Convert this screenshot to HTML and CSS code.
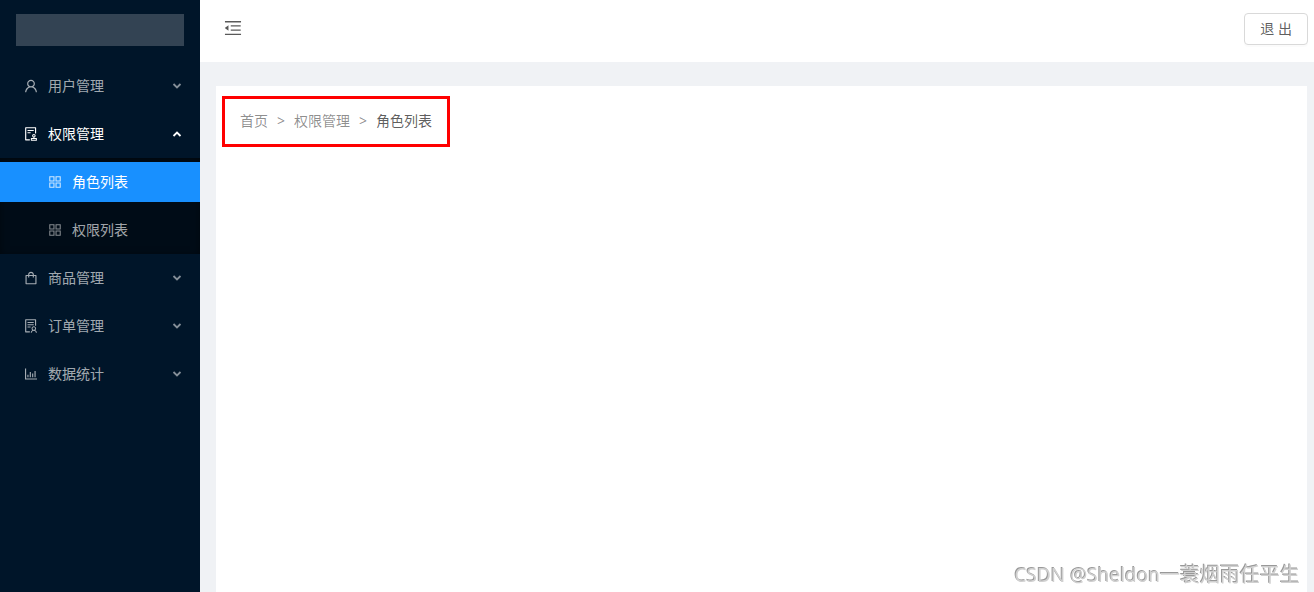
FILE: index.html
```html
<!DOCTYPE html>
<html lang="zh-CN">
<head>
    <meta charset="UTF-8">
    <meta name="viewport" content="width=device-width, initial-scale=1.0">
    <title>角色列表</title>
    <link rel="stylesheet" href="styles.css">
</head>
<body>
    <!-- icons -->
    <svg class="sprite" aria-hidden="true">
        <symbol id="i-user" viewBox="64 64 896 896"><path d="M858.5 763.6a374 374 0 00-80.6-119.5 375.63 375.63 0 00-119.5-80.6c-.4-.2-.8-.3-1.2-.5C719.5 518 760 444.7 760 362c0-137-111-248-248-248S264 225 264 362c0 82.7 40.5 156 102.8 201.1-.4.2-.8.3-1.2.5-44.8 18.9-85 46-119.5 80.6a375.63 375.63 0 00-80.6 119.5A371.7 371.7 0 00136 901.8a8 8 0 008 8.2h60c4.4 0 7.9-3.5 8-7.8 2-77.2 33-149.5 87.8-204.3 56.7-56.7 132-87.9 212.2-87.9s155.5 31.2 212.2 87.9C779 752.7 810 825 812 902.2c.1 4.4 3.6 7.8 8 7.8h60a8 8 0 008-8.2c-1-47.8-10.9-94.3-29.5-138.2zM512 534c-45.9 0-89.1-17.9-121.6-50.4S340 407.9 340 362c0-45.9 17.9-89.1 50.4-121.6S466.1 190 512 190s89.1 17.9 121.6 50.4S684 316.1 684 362c0 45.9-17.9 89.1-50.4 121.6S557.9 534 512 534z"/></symbol>
        <symbol id="i-audit" viewBox="64 64 896 896"><path d="M296 250c-4.4 0-8 3.6-8 8v48c0 4.4 3.6 8 8 8h384c4.4 0 8-3.6 8-8v-48c0-4.4-3.6-8-8-8H296zm184 144H296c-4.4 0-8 3.6-8 8v48c0 4.4 3.6 8 8 8h184c4.4 0 8-3.6 8-8v-48c0-4.4-3.6-8-8-8zm-48 458H208V148h560v320c0 4.4 3.6 8 8 8h56c4.4 0 8-3.6 8-8V108c0-17.7-14.3-32-32-32H168c-17.7 0-32 14.3-32 32v784c0 17.7 14.3 32 32 32h264c4.4 0 8-3.6 8-8v-56c0-4.4-3.6-8-8-8zm440-88H728v-36.6c46.3-13.8 80-56.6 80-107.4 0-61.9-50.1-112-112-112s-112 50.1-112 112c0 50.7 33.7 93.6 80 107.4V764H520c-8.8 0-16 7.2-16 16v152c0 8.8 7.2 16 16 16h352c8.8 0 16-7.2 16-16V780c0-8.8-7.2-16-16-16zM646 620c0-27.6 22.4-50 50-50s50 22.4 50 50-22.4 50-50 50-50-22.4-50-50zm180 266H566v-60h260v60z"/></symbol>
        <symbol id="i-appstore" viewBox="64 64 896 896"><path fill-rule="evenodd" d="M144 144h336v336H144zM212 212v200h200V212zM544 144h336v336H544zM612 212v200h200V212zM144 544h336v336H144zM212 612v200h200V612zM544 544h336v336H544zM612 612v200h200V612z"/></symbol>
        <symbol id="i-shopping" viewBox="64 64 896 896"><path d="M832 312H696v-16c0-101.6-82.4-184-184-184s-184 82.4-184 184v16H192c-17.7 0-32 14.3-32 32v536c0 17.7 14.3 32 32 32h640c17.7 0 32-14.3 32-32V344c0-17.7-14.3-32-32-32zm-432-16c0-61.9 50.1-112 112-112s112 50.1 112 112v16H400v-16zm392 544H232V384h96v88c0 4.4 3.6 8 8 8h56c4.4 0 8-3.6 8-8v-88h224v88c0 4.4 3.6 8 8 8h56c4.4 0 8-3.6 8-8v-88h96v456z"/></symbol>
        <symbol id="i-solution" viewBox="64 64 896 896"><path d="M688 264c0-4.4-3.6-8-8-8H296c-4.4 0-8 3.6-8 8v48c0 4.4 3.6 8 8 8h384c4.4 0 8-3.6 8-8v-48zm-8 136H296c-4.4 0-8 3.6-8 8v48c0 4.4 3.6 8 8 8h384c4.4 0 8-3.6 8-8v-48c0-4.4-3.6-8-8-8zM480 544H296c-4.4 0-8 3.6-8 8v48c0 4.4 3.6 8 8 8h184c4.4 0 8-3.6 8-8v-48c0-4.4-3.6-8-8-8zm-48 308H208V148h560v344c0 4.4 3.6 8 8 8h56c4.4 0 8-3.6 8-8V108c0-17.7-14.3-32-32-32H168c-17.7 0-32 14.3-32 32v784c0 17.7 14.3 32 32 32h264c4.4 0 8-3.6 8-8v-56c0-4.4-3.6-8-8-8zm356.8-74.4c29-26.3 47.2-64.3 47.2-106.6 0-79.5-64.5-144-144-144s-144 64.5-144 144c0 42.3 18.2 80.3 47.2 106.6-57 32.5-96.2 92.7-99.2 162.1-.2 4.5 3.5 8.3 8 8.3h48.1c4.2 0 7.7-3.3 8-7.6C564 871.2 621.7 816 692 816s128 55.2 131.9 124.4c.2 4.2 3.7 7.6 8 7.6H880c4.6 0 8.2-3.8 8-8.3-2.9-69.5-42.2-129.6-99.2-162.1zM692 591c44.2 0 80 35.8 80 80s-35.8 80-80 80-80-35.8-80-80 35.8-80 80-80z"/></symbol>
        <symbol id="i-chart" viewBox="64 64 896 896"><path d="M128 160h72v632h696v72H128zM280 552h72v160h-72zM432 376h72v336h-72zM584 472h72v240h-72zM736 312h72v400h-72z"/></symbol>
        <symbol id="i-fold" viewBox="64 64 896 896"><path d="M408 442h480c4.4 0 8-3.6 8-8v-56c0-4.4-3.6-8-8-8H408c-4.4 0-8 3.6-8 8v56c0 4.4 3.6 8 8 8zm-8 204c0 4.4 3.6 8 8 8h480c4.4 0 8-3.6 8-8v-56c0-4.4-3.6-8-8-8H408c-4.4 0-8 3.6-8 8v56zm504-486H120c-4.4 0-8 3.6-8 8v56c0 4.4 3.6 8 8 8h784c4.4 0 8-3.6 8-8v-56c0-4.4-3.6-8-8-8zm0 632H120c-4.4 0-8 3.6-8 8v56c0 4.4 3.6 8 8 8h784c4.4 0 8-3.6 8-8v-56c0-4.4-3.6-8-8-8zM115.4 518.9L271.7 642c5.8 4.6 14.4.5 14.4-6.9V388.9c0-7.4-8.5-11.5-14.4-6.9L115.4 505.1a8.74 8.74 0 000 13.8z"/></symbol>
        <symbol id="i-down" viewBox="0 0 10 10"><path d="M1.5 3L5 6.5 8.5 3" fill="none" stroke="currentColor" stroke-width="1.8"/></symbol>
    </svg>

    <aside class="sider">
        <div class="logo"></div>
        <nav class="menu">
            <button class="menu-item" type="button"><svg class="icon"><use href="#i-user"/></svg>用户管理<svg class="arrow"><use href="#i-down"/></svg></button>
            <button class="menu-item open" type="button"><svg class="icon"><use href="#i-audit"/></svg>权限管理<svg class="arrow"><use href="#i-down"/></svg></button>
            <div class="submenu">
                <a class="menu-item selected" href="#"><svg class="icon"><use href="#i-appstore"/></svg>角色列表</a>
                <a class="menu-item" href="#"><svg class="icon"><use href="#i-appstore"/></svg>权限列表</a>
            </div>
            <button class="menu-item" type="button"><svg class="icon"><use href="#i-shopping"/></svg>商品管理<svg class="arrow"><use href="#i-down"/></svg></button>
            <button class="menu-item" type="button"><svg class="icon"><use href="#i-solution"/></svg>订单管理<svg class="arrow"><use href="#i-down"/></svg></button>
            <button class="menu-item" type="button"><svg class="icon"><use href="#i-chart"/></svg>数据统计<svg class="arrow"><use href="#i-down"/></svg></button>
        </nav>
    </aside>

    <div class="layout">
        <header class="header">
            <button class="trigger" type="button" aria-label="收起菜单"><svg><use href="#i-fold"/></svg></button>
            <button class="logout" type="button">退 出</button>
        </header>
        <main class="content">
            <nav class="breadcrumb">
                <a href="#">首页</a>
                <span class="separator">&gt;</span>
                <a href="#">权限管理</a>
                <span class="separator">&gt;</span>
                <span class="current">角色列表</span>
            </nav>
        </main>
    </div>
    <div class="watermark"><span class="site">CSDN @Sheldon</span>一蓑烟雨任平生</div>
</body>
</html>
```
FILE: styles.css
```css
* { box-sizing: border-box; }
body {
    margin: 0;
    min-height: 100vh;
    display: flex;
    background: #f0f2f5;
    font: 14px/22px "Noto Sans", "Noto Sans CJK SC", sans-serif;
    color: rgba(0, 0, 0, 0.65);
}
a { color: inherit; text-decoration: none; }
button { font: inherit; color: inherit; cursor: pointer; }
svg { fill: currentColor; }
.sprite { display: none; }

.sider {
    flex: 0 0 200px;
    background: #001529;
}
.logo {
    height: 32px;
    margin: 14px 16px 16px;
    background: rgba(255, 255, 255, 0.2);
}
.menu {
    display: flex;
    flex-direction: column;
    color: rgba(255, 255, 255, 0.65);
}
.menu-item {
    display: flex;
    align-items: center;
    width: 100%;
    height: 40px;
    margin: 4px 0;
    padding: 0 18px 0 24px;
    border: 0;
    background: none;
}
.menu-item:hover, .open, .selected { color: #fff; }
.icon {
    width: 14px;
    height: 14px;
    margin-right: 10px;
}
.arrow {
    width: 10px;
    height: 10px;
    margin-left: auto;
    opacity: 0.8;
}
.open .arrow { transform: rotate(180deg); opacity: 1; }
.submenu {
    background: #000c17;
    box-shadow: inset 0 2px 8px rgba(0, 0, 0, 0.45);
    display: flow-root;
}
.submenu .menu-item { padding-left: 48px; }
.submenu .menu-item + .menu-item { margin-top: 8px; }
.submenu .icon { opacity: 0.8; }
.submenu .selected { background: #1890ff; }

.layout {
    flex: 1;
    display: flex;
    flex-direction: column;
}
.header {
    display: flex;
    align-items: center;
    justify-content: space-between;
    height: 62px;
    padding: 0 6px 4px 24px;
    background: #fff;
}
.trigger {
    display: flex;
    padding: 0 0 2px;
    border: 0;
    background: none;
}
.trigger svg { width: 18px; height: 18px; }
.logout {
    height: 32px;
    padding: 0 15px;
    border: 1px solid #d9d9d9;
    border-radius: 4px;
    background: #fff;
    box-shadow: 0 2px 0 rgba(0, 0, 0, 0.015);
}
.content {
    flex: 1;
    margin: 24px 7px 0 16px;
    padding: 10px 6px;
    background: #fff;
}
.breadcrumb {
    display: inline-flex;
    padding: 11px 15px 12px;
    border: 3px solid #f00;
    color: rgba(0, 0, 0, 0.45);
}
.separator { margin: 0 9px; }
.current { color: rgba(0, 0, 0, 0.65); }

.watermark {
    position: fixed;
    right: 14px;
    bottom: 3px;
    font-size: 20px;
    line-height: 28px;
    color: #d0d0d0;
    text-shadow: -1px -1px 0 #999;
}
.site { font-size: 19px; }
```
